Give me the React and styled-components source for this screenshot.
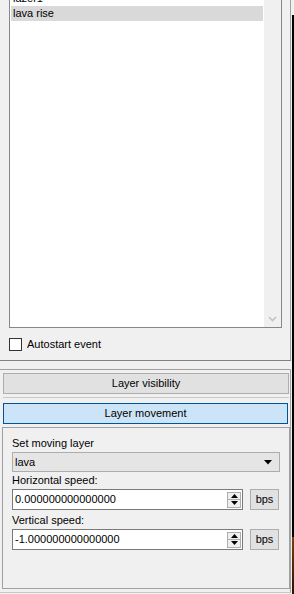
import React, { useState } from "react";
import styled, { createGlobalStyle } from "styled-components";

const GlobalStyle = createGlobalStyle`
  html, body {
    margin: 0;
    padding: 0;
    background: #f0f0f0;
  }
  * {
    box-sizing: border-box;
  }
`;

export default function App() {
  const [autostart, setAutostart] = useState(false);
  const [selected] = useState("lava rise");
  const events = ["lazer1", "lava rise"];

  return (
    <Screen>
      <GlobalStyle />
      <Main>
        {/* event list */}
        <TopPanel>
          <ListBox>
            <ListRows>
              {events.map((name) => (
                <ListRow key={name} $selected={name === selected}>
                  {name}
                </ListRow>
              ))}
            </ListRows>
            <ScrollTrack>
              <ScrollArrow>
                <svg width="9" height="6" viewBox="0 0 9 6">
                  <polyline points="1,1 4.5,4.5 8,1" fill="none" stroke="#c2c2c2" strokeWidth="1.6" />
                </svg>
              </ScrollArrow>
            </ScrollTrack>
          </ListBox>
          <CheckRow onClick={() => setAutostart(!autostart)}>
            <CheckBox $checked={autostart} />
            <span>Autostart event</span>
          </CheckRow>
        </TopPanel>

        {/* toolbox */}
        <BottomPanel>
          <TabButton>Layer visibility</TabButton>
          <Separator />
          <TabButton $active>Layer movement</TabButton>
          <Group>
            <FieldLabel>Set moving layer</FieldLabel>
            <Combo>
              <span>lava</span>
              <svg width="8" height="5" viewBox="0 0 8 5">
                <polygon points="0,0 8,0 4,4.5" fill="#000" />
              </svg>
            </Combo>
            <FieldLabel $top={1}>Horizontal speed:</FieldLabel>
            <SpeedRow>
              <SpinBox>
                <SpinText>0.000000000000000</SpinText>
                <SpinButtons>
                  <SpinHalf>
                    <svg width="7" height="4" viewBox="0 0 7 4">
                      <polygon points="0,4 7,4 3.5,0" fill="#000" />
                    </svg>
                  </SpinHalf>
                  <SpinHalf>
                    <svg width="7" height="4" viewBox="0 0 7 4">
                      <polygon points="0,0 7,0 3.5,4" fill="#000" />
                    </svg>
                  </SpinHalf>
                </SpinButtons>
              </SpinBox>
              <UnitButton>bps</UnitButton>
            </SpeedRow>
            <FieldLabel $top={3}>Vertical speed:</FieldLabel>
            <SpeedRow>
              <SpinBox>
                <SpinText>-1.000000000000000</SpinText>
                <SpinButtons>
                  <SpinHalf>
                    <svg width="7" height="4" viewBox="0 0 7 4">
                      <polygon points="0,4 7,4 3.5,0" fill="#000" />
                    </svg>
                  </SpinHalf>
                  <SpinHalf>
                    <svg width="7" height="4" viewBox="0 0 7 4">
                      <polygon points="0,0 7,0 3.5,4" fill="#000" />
                    </svg>
                  </SpinHalf>
                </SpinButtons>
              </SpinBox>
              <UnitButton>bps</UnitButton>
            </SpeedRow>
          </Group>
        </BottomPanel>
      </Main>
      <Edge />
    </Screen>
  );
}

const Screen = styled.div`
  display: flex;
  width: 294px;
  height: 594px;
  overflow: hidden;
  background: #f0f0f0;
  font-family: "Liberation Sans", Arial, sans-serif;
  font-size: 11px;
  line-height: 15px;
  color: #000;
`;

const Main = styled.div`
  width: 292px;
  display: flex;
  flex-direction: column;
`;

const TopPanel = styled.div`
  width: 291px;
  height: 361px;
  padding-left: 9px;
  border-right: 1px solid #a0a0a0;
  border-bottom: 1px solid #808080;
  display: flex;
  flex-direction: column;
`;

const ListBox = styled.div`
  margin-top: -11px;
  width: 273px;
  height: 339px;
  border: 1px solid #828790;
  background: #fff;
  display: flex;
`;

const ListRows = styled.div`
  flex: 1;
  padding: 1px 1px 0 1px;
`;

const ListRow = styled.div`
  height: 15px;
  padding-left: 2px;
  width: 252px;
  background: ${(p) => (p.$selected ? "#d9d9d9" : "transparent")};
`;

const ScrollTrack = styled.div`
  width: 17px;
  background: #f0f0f0;
  display: flex;
  flex-direction: column;
  justify-content: flex-end;
`;

const ScrollArrow = styled.div`
  height: 17px;
  display: flex;
  align-items: center;
  justify-content: center;
`;

const CheckRow = styled.label`
  margin-top: 9px;
  display: flex;
  align-items: center;
  gap: 5px;
  cursor: default;
`;

const CheckBox = styled.span`
  width: 13px;
  height: 13px;
  border: 1px solid #333;
  background: ${(p) => (p.$checked ? "#cce4f7" : "#fff")};
`;

const BottomPanel = styled.div`
  margin-top: 8px;
  width: 291px;
  height: 224px;
  padding: 3px 0 0 2px;
  border-top: 1px solid #a0a0a0;
  border-right: 1px solid #a0a0a0;
  border-bottom: 1px solid #c8c8c8;
  display: flex;
  flex-direction: column;
`;

const TabButton = styled.div`
  margin-left: 1px;
  width: ${(p) => (p.$active ? "285px" : "286px")};
  height: 21px;
  border: 1px solid ${(p) => (p.$active ? "#005499" : "#adadad")};
  background: ${(p) => (p.$active ? "#cce4f7" : "#e1e1e1")};
  text-align: center;
  line-height: 19px;
`;

const Separator = styled.div`
  margin: 3px 0 5px 1px;
  width: 286px;
  height: 1px;
  background: #c8c8c8;
`;

const Group = styled.div`
  margin-top: 3px;
  width: 288px;
  height: 162px;
  border: 1px solid #a0a0a0;
  padding: 8px 0 0 9px;
  display: flex;
  flex-direction: column;
`;

const FieldLabel = styled.div`
  margin-top: ${(p) => p.$top || 0}px;
  height: 15px;
`;

const Combo = styled.div`
  margin-top: 1px;
  width: 268px;
  height: 20px;
  border: 1px solid #adadad;
  background: #e5e5e5;
  display: flex;
  align-items: center;
  justify-content: space-between;
  padding: 0 7px 0 2px;
`;

const SpeedRow = styled.div`
  margin-top: 1px;
  display: flex;
  gap: 7px;
`;

const SpinBox = styled.div`
  width: 231px;
  height: 21px;
  border: 1px solid #7a7a7a;
  background: #fff;
  display: flex;
  align-items: center;
  justify-content: space-between;
  padding: 0 1px 0 2px;
`;

const SpinText = styled.span`
  line-height: 15px;
`;

const SpinButtons = styled.div`
  width: 14px;
  height: 16px;
  display: flex;
  flex-direction: column;
  border: 1px solid #adadad;
  background: #f0f0f0;
`;

const SpinHalf = styled.div`
  flex: 1;
  display: flex;
  align-items: center;
  justify-content: center;
  & + & {
    border-top: 1px solid #adadad;
  }
`;

const UnitButton = styled.div`
  width: 29px;
  height: 21px;
  border: 1px solid #adadad;
  background: #e1e1e1;
  text-align: center;
  line-height: 19px;
`;

const Edge = styled.div`
  width: 2px;
  height: 594px;
  background: linear-gradient(
    to bottom,
    #f0f0f0 0,
    #f0f0f0 15px,
    #000 15px,
    #000 537px,
    #7a3d0c 537px,
    #2a1205 594px
  );
`;
